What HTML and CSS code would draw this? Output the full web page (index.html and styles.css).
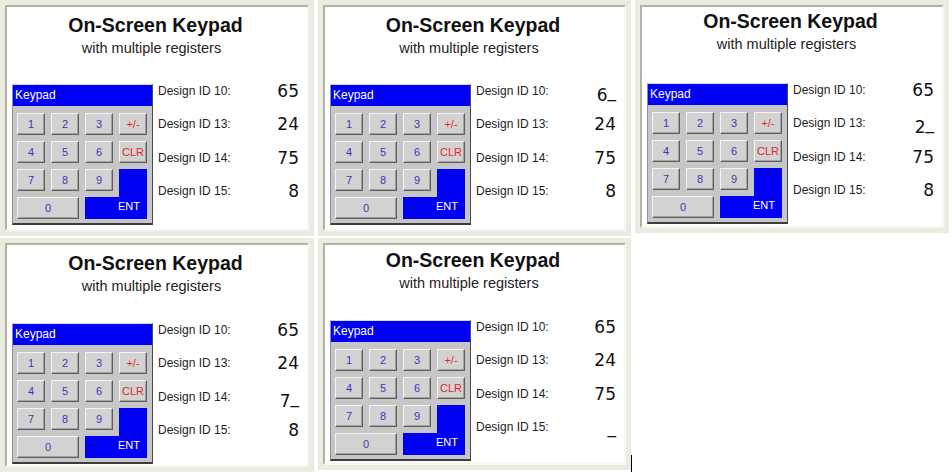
FILE: index.html
```html
<!DOCTYPE html>
<html lang="en">
<head>
<meta charset="utf-8">
<title>On-Screen Keypad</title>
<link rel="stylesheet" href="styles.css">
</head>
<body>
<main class="sheet">

  <section class="window win-1">
    <div class="client">
      <h1 class="title">On-Screen Keypad</h1>
      <p class="subtitle">with multiple registers</p>
      <div class="screen">
        <div class="keypad">
          <div class="keypad-bar">Keypad</div>
          <div class="keys">
            <span class="key key-ent">ENT</span>
            <span class="key">1</span><span class="key">2</span><span class="key">3</span><span class="key key-fn">+/-</span>
            <span class="key">4</span><span class="key">5</span><span class="key">6</span><span class="key key-fn">CLR</span>
            <span class="key">7</span><span class="key">8</span><span class="key key-nine">9</span>
            <span class="key key-zero">0</span>
          </div>
        </div>
        <dl class="registers">
          <div class="reg"><dt>Design ID 10:</dt><dd>65</dd></div>
          <div class="reg"><dt>Design ID 13:</dt><dd>24</dd></div>
          <div class="reg"><dt>Design ID 14:</dt><dd>75</dd></div>
          <div class="reg"><dt>Design ID 15:</dt><dd>8</dd></div>
        </dl>
      </div>
    </div>
  </section>

  <section class="window win-2">
    <div class="client">
      <h1 class="title">On-Screen Keypad</h1>
      <p class="subtitle">with multiple registers</p>
      <div class="screen">
        <div class="keypad">
          <div class="keypad-bar">Keypad</div>
          <div class="keys">
            <span class="key key-ent">ENT</span>
            <span class="key">1</span><span class="key">2</span><span class="key">3</span><span class="key key-fn">+/-</span>
            <span class="key">4</span><span class="key">5</span><span class="key">6</span><span class="key key-fn">CLR</span>
            <span class="key">7</span><span class="key">8</span><span class="key key-nine">9</span>
            <span class="key key-zero">0</span>
          </div>
        </div>
        <dl class="registers">
          <div class="reg"><dt>Design ID 10:</dt><dd>6<span class="cursor">_</span></dd></div>
          <div class="reg"><dt>Design ID 13:</dt><dd>24</dd></div>
          <div class="reg"><dt>Design ID 14:</dt><dd>75</dd></div>
          <div class="reg"><dt>Design ID 15:</dt><dd>8</dd></div>
        </dl>
      </div>
    </div>
  </section>

  <section class="window win-3">
    <div class="client">
      <h1 class="title">On-Screen Keypad</h1>
      <p class="subtitle">with multiple registers</p>
      <div class="screen">
        <div class="keypad">
          <div class="keypad-bar">Keypad</div>
          <div class="keys">
            <span class="key key-ent">ENT</span>
            <span class="key">1</span><span class="key">2</span><span class="key">3</span><span class="key key-fn">+/-</span>
            <span class="key">4</span><span class="key">5</span><span class="key">6</span><span class="key key-fn">CLR</span>
            <span class="key">7</span><span class="key">8</span><span class="key key-nine">9</span>
            <span class="key key-zero">0</span>
          </div>
        </div>
        <dl class="registers">
          <div class="reg"><dt>Design ID 10:</dt><dd>65</dd></div>
          <div class="reg"><dt>Design ID 13:</dt><dd>2<span class="cursor">_</span></dd></div>
          <div class="reg"><dt>Design ID 14:</dt><dd>75</dd></div>
          <div class="reg"><dt>Design ID 15:</dt><dd>8</dd></div>
        </dl>
      </div>
    </div>
  </section>

  <section class="window win-4">
    <div class="client">
      <h1 class="title">On-Screen Keypad</h1>
      <p class="subtitle">with multiple registers</p>
      <div class="screen">
        <div class="keypad">
          <div class="keypad-bar">Keypad</div>
          <div class="keys">
            <span class="key key-ent">ENT</span>
            <span class="key">1</span><span class="key">2</span><span class="key">3</span><span class="key key-fn">+/-</span>
            <span class="key">4</span><span class="key">5</span><span class="key">6</span><span class="key key-fn">CLR</span>
            <span class="key">7</span><span class="key">8</span><span class="key key-nine">9</span>
            <span class="key key-zero">0</span>
          </div>
        </div>
        <dl class="registers">
          <div class="reg"><dt>Design ID 10:</dt><dd>65</dd></div>
          <div class="reg"><dt>Design ID 13:</dt><dd>24</dd></div>
          <div class="reg"><dt>Design ID 14:</dt><dd>7<span class="cursor">_</span></dd></div>
          <div class="reg"><dt>Design ID 15:</dt><dd>8</dd></div>
        </dl>
      </div>
    </div>
  </section>

  <section class="window win-5">
    <div class="client">
      <h1 class="title">On-Screen Keypad</h1>
      <p class="subtitle">with multiple registers</p>
      <div class="screen">
        <div class="keypad">
          <div class="keypad-bar">Keypad</div>
          <div class="keys">
            <span class="key key-ent">ENT</span>
            <span class="key">1</span><span class="key">2</span><span class="key">3</span><span class="key key-fn">+/-</span>
            <span class="key">4</span><span class="key">5</span><span class="key">6</span><span class="key key-fn">CLR</span>
            <span class="key">7</span><span class="key">8</span><span class="key key-nine">9</span>
            <span class="key key-zero">0</span>
          </div>
        </div>
        <dl class="registers">
          <div class="reg"><dt>Design ID 10:</dt><dd>65</dd></div>
          <div class="reg"><dt>Design ID 13:</dt><dd>24</dd></div>
          <div class="reg"><dt>Design ID 14:</dt><dd>75</dd></div>
          <div class="reg"><dt>Design ID 15:</dt><dd><span class="cursor">_</span></dd></div>
        </dl>
      </div>
    </div>
  </section>

  <div class="caret"></div>
</main>
</body>
</html>
```

FILE: styles.css
```css
html, body {
  margin: 0;
  background: #ffffff;
}

body {
  width: 952px;
  height: 472px;
  overflow: hidden;
  font-family: "Liberation Sans", Arial, sans-serif;
}

/* five screen captures laid out 3 + 2 */
.sheet {
  position: relative;
  display: grid;
  grid-template-columns: 314px 313px 314px;
  grid-template-rows: 236px 234px;
  column-gap: 4px;
  row-gap: 2px;
  align-items: start;
}

.window {
  box-sizing: border-box;
  padding: 5px;
  background: #ecebdf;
  --title-pad: 7px;
  --gap: 27px;
}

.win-1 { height: 236px; }
.win-2 { height: 236px; }
.win-3 { height: 233px; --title-pad: 3px; --gap: 30px; }
.win-4 { height: 234px; --title-pad: 7px; --gap: 28px; }
.win-5 { height: 232px; --title-pad: 4px; --gap: 28px; }

.client {
  box-sizing: border-box;
  height: 100%;
  background: #ffffff;
  border: 2px solid;
  border-color: #b3b2a6 #f7f7f2 #f7f7f2 #b3b2a6;
}

.title {
  margin: 0;
  padding: var(--title-pad) 3px 0 0;
  font: bold 19.5px/22px "Liberation Sans", Arial, sans-serif;
  color: #111111;
  text-align: center;
}

.subtitle {
  margin: 3px 0 0;
  padding-right: 11px;
  font: 14.5px/18px "Liberation Sans", Arial, sans-serif;
  color: #222222;
  text-align: center;
}

.screen {
  display: flex;
  margin-top: var(--gap);
  padding: 0 8px 0 5px;
}

/* keypad popup */
.keypad {
  flex: none;
  box-sizing: border-box;
  width: 141px;
  height: 141px;
  background: #c6c6c6;
  border: 1px solid;
  border-color: #d6d6ec #4a4a4a #3c3c3c #8c8ca6;
  border-bottom-width: 2px;
}

.keypad-bar {
  height: 21px;
  padding-left: 2px;
  background: #0000f5;
  color: #ffffff;
  font: 12px/21px "Liberation Sans", Arial, sans-serif;
}

.keys {
  display: grid;
  grid-template-columns: repeat(4, 28px);
  grid-template-rows: repeat(4, 22px);
  gap: 6px;
  padding: 7px 5px 4px 4px;
}

.key {
  box-sizing: border-box;
  display: flex;
  align-items: center;
  justify-content: center;
  background: #d2d2d2;
  border: 1px solid;
  border-color: #f4f4f4 #5e5e5e #5e5e5e #f4f4f4;
  box-shadow: inset -1px -1px 0 #a2a2a2;
  font: 11px/13px "Liberation Sans", Arial, sans-serif;
  color: #3a3ab2;
}

.key-fn {
  color: #e02a2a;
}

.key-zero {
  grid-column: 1 / 3;
  grid-row: 4;
}

.key-nine {
  grid-column: 3;
  grid-row: 3;
}

/* L-shaped enter key covering the lower right corner */
.key-ent {
  grid-column: 3 / 5;
  grid-row: 3 / 5;
  align-items: flex-end;
  justify-content: flex-end;
  padding: 0 7px 6px 0;
  background: #0000f5;
  border: none;
  box-shadow: none;
  color: #ffffff;
  clip-path: polygon(34px 0, 100% 0, 100% 100%, 0 100%, 0 28px, 34px 28px);
}

/* register readouts */
.registers {
  flex: 1;
  display: flex;
  flex-direction: column;
  margin: 0 0 0 5px;
}

.reg {
  height: 33.33px;
  display: flex;
  justify-content: space-between;
  align-items: flex-start;
}

.reg dt {
  font: 12px/14px "Liberation Sans", Arial, sans-serif;
  color: #222222;
}

.reg dd {
  margin: 0;
  font: 17px/14px "DejaVu Sans", Verdana, sans-serif;
  color: #111111;
}

.cursor {
  vertical-align: 0.24em;
}

.caret {
  position: absolute;
  left: 631px;
  top: 455px;
  width: 1px;
  height: 17px;
  background: #000000;
}
```
